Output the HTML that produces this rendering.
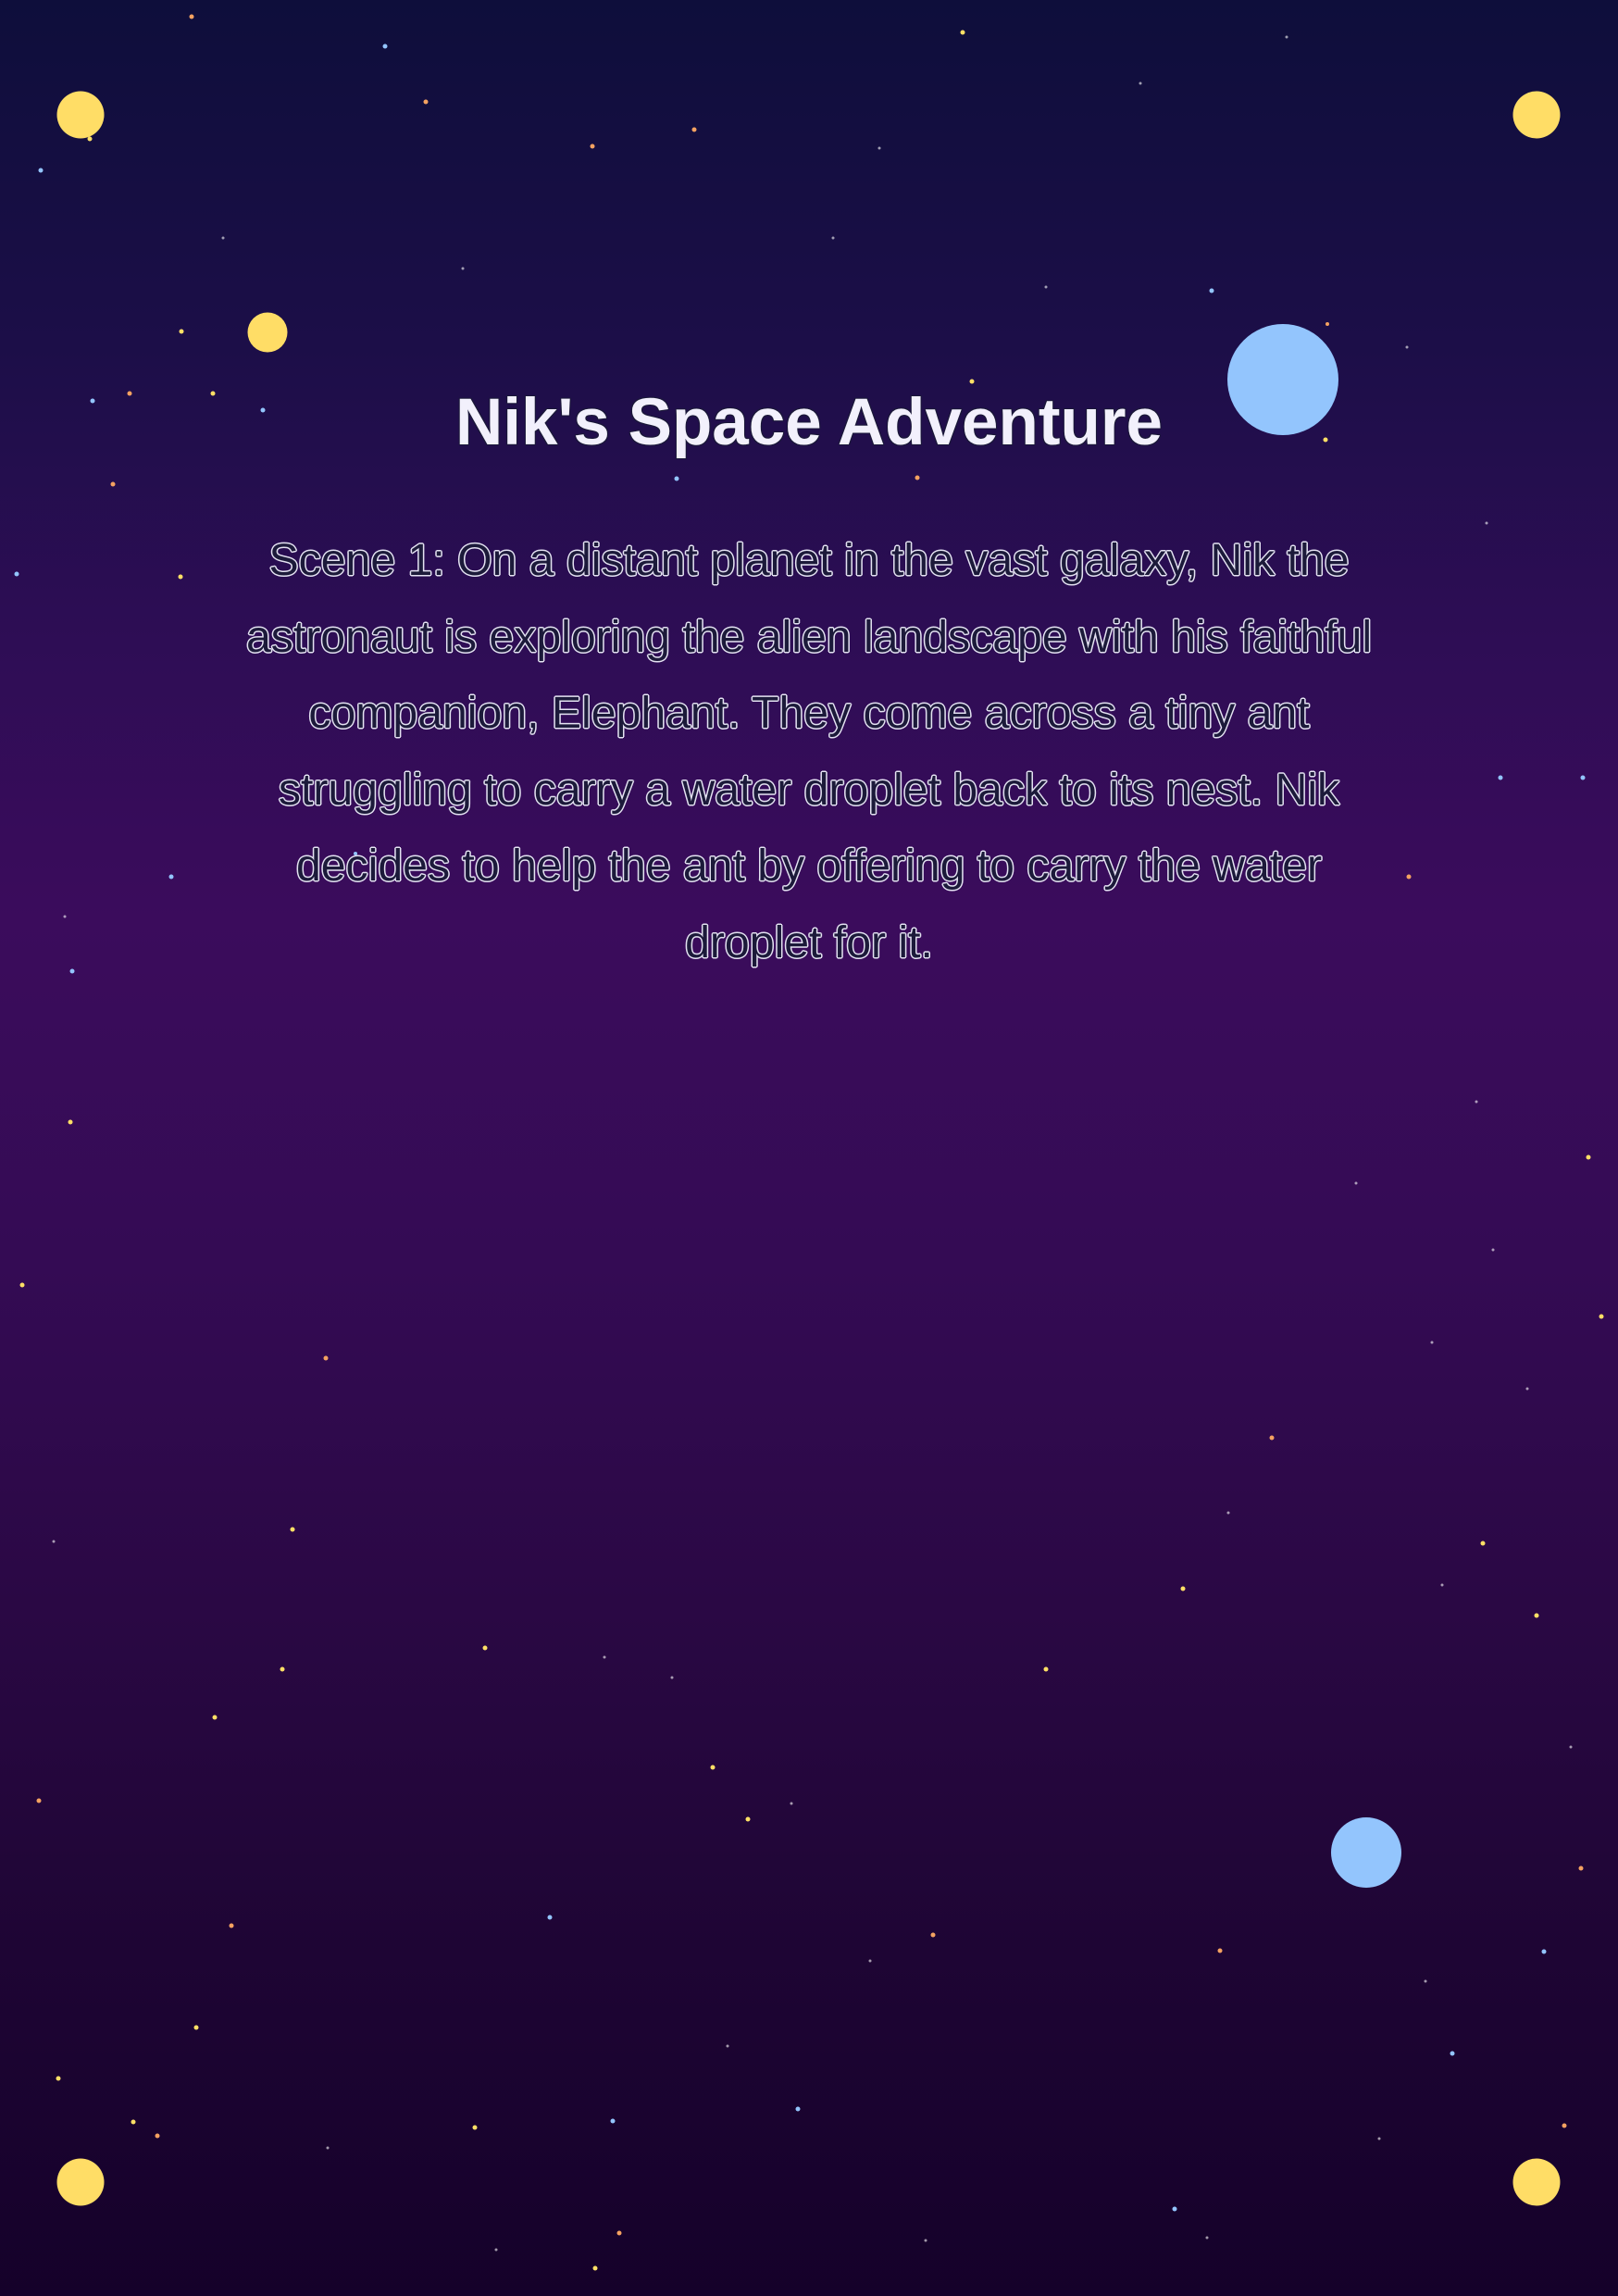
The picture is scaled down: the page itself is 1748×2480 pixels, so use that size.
<!DOCTYPE html>
<html><head><meta charset="utf-8"><style>
html,body{margin:0;padding:0}
body{width:1748px;height:2480px;position:relative;overflow:hidden;
background:linear-gradient(to bottom,#0e0e3b 0%,#1c0e48 15%,#2e0d55 28%,#3b0c5c 40%,#340b54 55%,#2a0844 70%,#1e0534 85%,#15012a 100%);
font-family:"Liberation Sans",Arial,sans-serif}
svg{position:absolute;left:0;top:0}
.t{position:absolute;left:0;width:1748px;top:416px;text-align:center;font-weight:bold;font-size:71px;color:#f2f0fc;
text-shadow:1px 1px 0 #1a1838,-1px -1px 0 #1a1838,1px -1px 0 #1a1838,-1px 1px 0 #1a1838}
.p{position:absolute;left:254px;width:1240px;top:564px;text-align:center;font-size:48.2px;line-height:82.5px;color:#1c1a3a;
text-shadow:1.5px 0 0 #e4e2f2,-1.5px 0 0 #e4e2f2,0 1.5px 0 #e4e2f2,0 -1.5px 0 #e4e2f2,1px 1px 0 #e4e2f2,-1px -1px 0 #e4e2f2,1px -1px 0 #e4e2f2,-1px 1px 0 #e4e2f2}
</style></head><body>
<svg width="1748" height="2480" viewBox="0 0 1748 2480">
<g fill="#ffdd66">
<circle cx="87" cy="124" r="25.5"/><circle cx="1660" cy="124" r="25.5"/>
<circle cx="87" cy="2357" r="25.5"/><circle cx="1660" cy="2357" r="25.5"/>
<circle cx="289" cy="359" r="21.5"/>
</g>
<g fill="#93c5fd"><circle cx="1386" cy="410" r="60"/><circle cx="1476" cy="2001" r="38"/></g>
<g fill="#ffe066">
<circle cx="97" cy="150" r="2.5"/><circle cx="196" cy="358" r="2.5"/><circle cx="1050" cy="412" r="2.5"/><circle cx="1432" cy="475" r="2.5"/><circle cx="1716" cy="1250" r="2.5"/><circle cx="316" cy="1652" r="2.5"/><circle cx="305" cy="1803" r="2.5"/><circle cx="1278" cy="1716" r="2.5"/><circle cx="1602" cy="1667" r="2.5"/><circle cx="1660" cy="1745" r="2.5"/><circle cx="770" cy="1909" r="2.5"/><circle cx="808" cy="1965" r="2.5"/><circle cx="232" cy="1855" r="2.5"/><circle cx="524" cy="1780" r="2.5"/><circle cx="643" cy="2450" r="2.5"/><circle cx="513" cy="2298" r="2.5"/><circle cx="144" cy="2292" r="2.5"/><circle cx="1130" cy="1803" r="2.5"/><circle cx="212" cy="2190" r="2.5"/><circle cx="63" cy="2245" r="2.5"/><circle cx="1730" cy="1422" r="2.5"/><circle cx="24" cy="1388" r="2.5"/><circle cx="76" cy="1212" r="2.5"/><circle cx="195" cy="623" r="2.5"/><circle cx="1040" cy="35" r="2.5"/><circle cx="230" cy="425" r="2.5"/>
</g>
<g fill="#f4a261">
<circle cx="207" cy="18" r="2.5"/><circle cx="460" cy="110" r="2.5"/><circle cx="640" cy="158" r="2.5"/><circle cx="750" cy="140" r="2.5"/><circle cx="991" cy="516" r="2.5"/><circle cx="140" cy="425" r="2.5"/><circle cx="122" cy="523" r="2.5"/><circle cx="1522" cy="947" r="2.5"/><circle cx="352" cy="1467" r="2.5"/><circle cx="1374" cy="1553" r="2.5"/><circle cx="42" cy="1945" r="2.5"/><circle cx="250" cy="2080" r="2.5"/><circle cx="1008" cy="2090" r="2.5"/><circle cx="1318" cy="2107" r="2.5"/><circle cx="1690" cy="2296" r="2.5"/><circle cx="170" cy="2307" r="2.5"/><circle cx="669" cy="2412" r="2.5"/><circle cx="1708" cy="2018" r="2.5"/><circle cx="1434" cy="350" r="2"/>
</g>
<g fill="#93c5fd">
<circle cx="44" cy="184" r="2.5"/><circle cx="416" cy="50" r="2.5"/><circle cx="100" cy="433" r="2.5"/><circle cx="284" cy="443" r="2.5"/><circle cx="731" cy="517" r="2.5"/><circle cx="1309" cy="314" r="2.5"/><circle cx="18" cy="620" r="2.5"/><circle cx="78" cy="1049" r="2.5"/><circle cx="185" cy="947" r="2.5"/><circle cx="1621" cy="840" r="2.5"/><circle cx="1710" cy="840" r="2.5"/><circle cx="594" cy="2071" r="2.5"/><circle cx="1668" cy="2108" r="2.5"/><circle cx="1569" cy="2218" r="2.5"/><circle cx="662" cy="2291" r="2.5"/><circle cx="862" cy="2278" r="2.5"/><circle cx="1269" cy="2386" r="2.5"/><circle cx="384" cy="922" r="2"/>
</g>
<g fill="#ffffff" opacity="0.6">
<circle cx="241" cy="257" r="1.5"/><circle cx="500" cy="290" r="1.5"/><circle cx="900" cy="257" r="1.5"/><circle cx="1130" cy="310" r="1.5"/><circle cx="1520" cy="375" r="1.5"/><circle cx="1606" cy="565" r="1.5"/><circle cx="70" cy="990" r="1.5"/><circle cx="1595" cy="1190" r="1.5"/><circle cx="1465" cy="1278" r="1.5"/><circle cx="1613" cy="1350" r="1.5"/><circle cx="1547" cy="1450" r="1.5"/><circle cx="1327" cy="1634" r="1.5"/><circle cx="58" cy="1665" r="1.5"/><circle cx="653" cy="1790" r="1.5"/><circle cx="726" cy="1812" r="1.5"/><circle cx="1558" cy="1712" r="1.5"/><circle cx="1697" cy="1887" r="1.5"/><circle cx="855" cy="1948" r="1.5"/><circle cx="940" cy="2118" r="1.5"/><circle cx="786" cy="2210" r="1.5"/><circle cx="354" cy="2320" r="1.5"/><circle cx="1540" cy="2140" r="1.5"/><circle cx="1304" cy="2417" r="1.5"/><circle cx="1490" cy="2310" r="1.5"/><circle cx="950" cy="160" r="1.5"/><circle cx="1390" cy="40" r="1.5"/><circle cx="1232" cy="90" r="1.5"/><circle cx="1650" cy="1500" r="1.5"/><circle cx="1000" cy="2420" r="1.5"/><circle cx="536" cy="2430" r="1.5"/>
</g>
</svg>
<div class="t">Nik's Space Adventure</div>
<div class="p">Scene 1: On a distant planet in the vast galaxy, Nik the astronaut is exploring the alien landscape with his faithful companion, Elephant. They come across a tiny ant struggling to carry a water droplet back to its nest. Nik decides to help the ant by offering to carry the water droplet for it.</div>
</body></html>
